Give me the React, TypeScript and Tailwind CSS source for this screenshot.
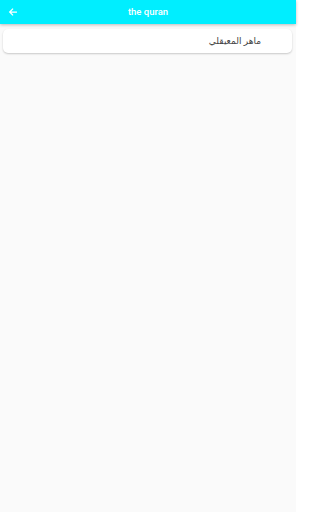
import React from "react";

export default function App() {
  return (
    <div className="w-[296px] h-[512px] bg-[#fafafa] flex flex-col" style={{ fontFamily: 'Roboto, "Noto Sans", sans-serif' }}>
      <div className="h-[24px] bg-[#00eeff] flex items-center relative shadow-[0_1px_3px_rgba(0,0,0,0.25)]">
        <div className="pl-[8px] flex items-center">
          <svg width="10" height="10" viewBox="0 0 24 24" fill="none" stroke="white" strokeWidth="3" strokeLinecap="square">
            <path d="M20 12H5M11 5l-7 7 7 7" />
          </svg>
        </div>
        <div className="absolute inset-0 flex items-center justify-center text-white text-[9.5px] font-medium pointer-events-none">
          the quran
        </div>
      </div>
      <div className="pl-[3px] pr-[4px] pt-[5px]">
        <div className="h-[24px] bg-white rounded-[5px] shadow-[0_1px_2px_rgba(0,0,0,0.2)] flex items-center justify-end pr-[31px]">
          <span dir="rtl" className="text-[9px] text-[#444]" style={{ fontFamily: '"Noto Sans", "DejaVu Sans", sans-serif' }}>ماهر المعيقلي</span>
        </div>
      </div>
    </div>
  );
}
